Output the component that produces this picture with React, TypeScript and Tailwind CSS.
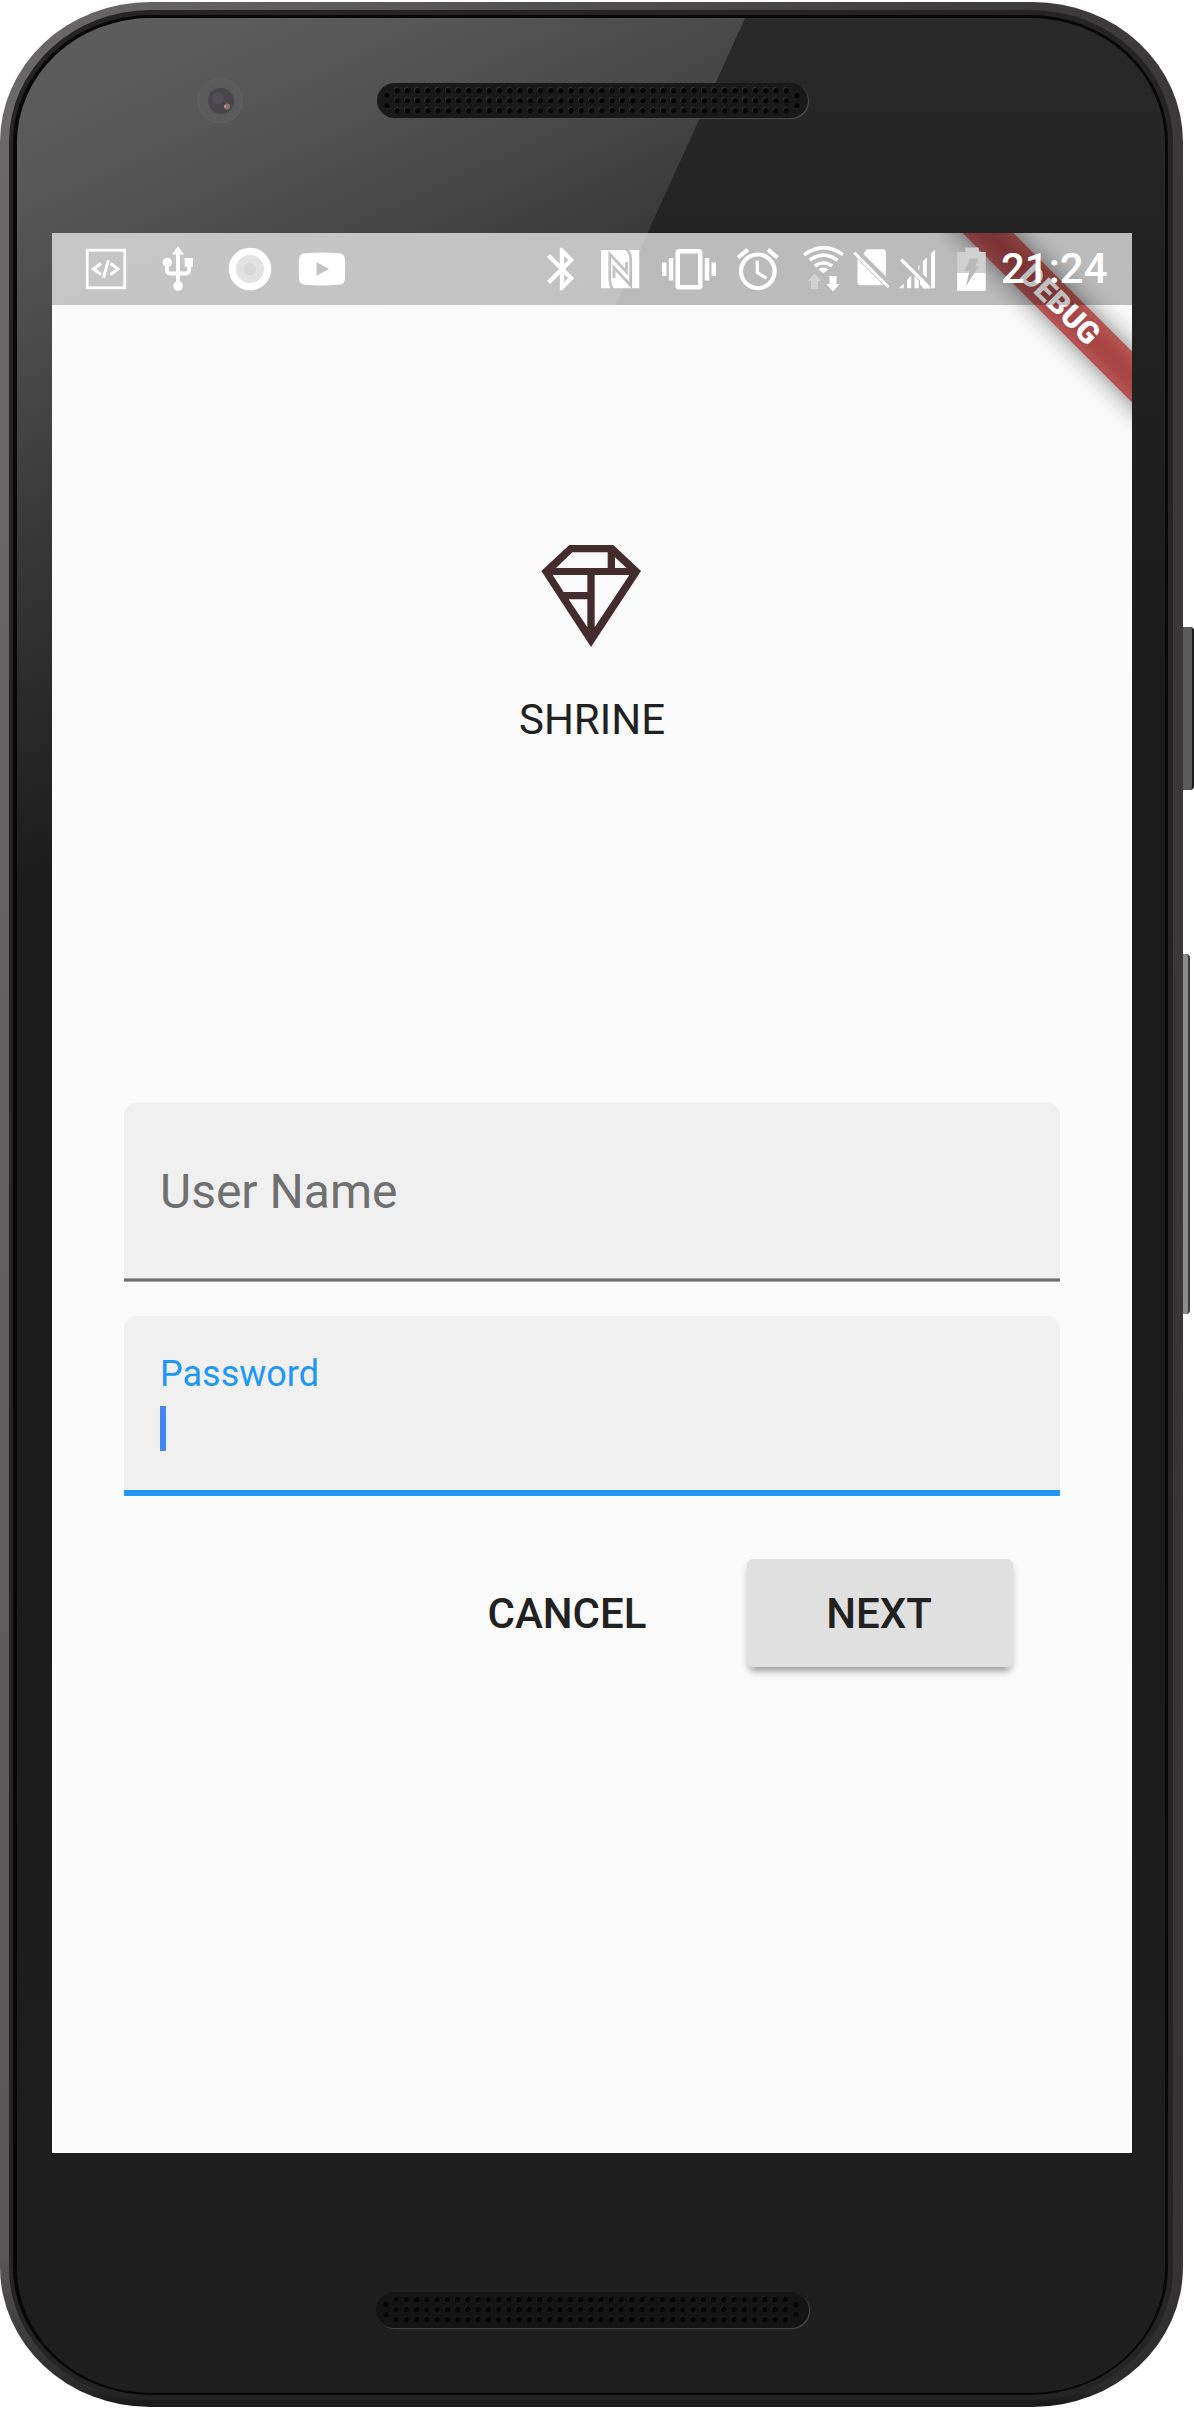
import React from "react";

const COLUMNS = Array.from({ length: 39 }, (_, i) => 20 + i * 10.24);

function Speaker({ dim = false }: { dim?: boolean }) {
  return (
    <div
      className={
        dim
          ? "h-9 w-[433px] rounded-full bg-[#141414] shadow-[1px_1px_1px_#4a4a4a]"
          : "h-[35px] w-[431px] rounded-full bg-[#191919] shadow-[1px_1px_1px_#4d4d4d]"
      }
    >
      <svg width="431" height="35" viewBox="0 0 431 35">
        {COLUMNS.map((x) =>
          [7.5, 17.5, 27.5].map((y) => (
            <g key={`${x}-${y}`}>
              <circle cx={x - 0.7} cy={y - 0.7} r="2.6" fill={dim ? "#202020" : "#383838"} />
              <circle cx={x} cy={y} r="2.6" fill="#050505" />
            </g>
          )),
        )}
        {[10, 420].map((x) =>
          [12.5, 22.5].map((y) => <circle key={`${x}-${y}`} cx={x} cy={y} r="2.6" fill="#050505" />),
        )}
      </svg>
    </div>
  );
}

function Slot({ x, w, children }: { x: number; w: number; children: React.ReactNode }) {
  return (
    <svg className="shrink-0" width={w} height="72" viewBox={`${x} 233 ${w} 72`} fill="#fff">
      {children}
    </svg>
  );
}

function StatusBar() {
  return (
    <div className="relative flex h-[72px] items-center bg-black/25">
      <Slot x={52} w={86}>
        <rect x="87.2" y="250.2" width="37.6" height="37.6" fill="none" stroke="#fff" strokeWidth="2.8" />
        <path
          d="M101 263.5l-7.500 5.500 7.500 5.500M110.500 263.500l7.500 5.500-7.500 5.500M108.300 260.300l-4.800 17.600"
          fill="none"
          stroke="#fff"
          strokeWidth="3"
        />
      </Slot>
      <Slot x={138} w={76}>
        <path d="M178 246l6 8.500h-12z" />
        <circle cx="167.300" cy="262.500" r="4.700" />
        <rect x="184.700" y="258" width="8.300" height="8.600" />
        <circle cx="178" cy="286" r="4.800" />
        <path
          d="M178 253v32M166.900 262v8q0 3.500 3.500 3.500h15.200q3.500 0 3.500-3.500v-5"
          fill="none"
          stroke="#fff"
          strokeWidth="3.900"
        />
      </Slot>
      <Slot x={214} w={72}>
        <circle cx="250" cy="269" r="21.300" />
        <circle cx="250" cy="269" r="14" fill="#ddd" />
        <circle cx="250" cy="269" r="6.200" fill="#d2d2d2" />
      </Slot>
      <Slot x={286} w={72}>
        <path
          fillRule="evenodd"
          d="M305 253.200C316 252.300 328 252.300 339 253.200C343 253.600 344.600 255.500 344.900 259.200C345.300 265.800 345.300 272.200 344.900 278.800C344.600 282.500 343 284.400 339 284.800C328 285.700 316 285.700 305 284.800C301 284.400 299.400 282.500 299.100 278.800C298.700 272.200 298.700 265.800 299.100 259.200C299.400 255.500 301 253.600 305 253.200ZM316.500 262V275.800L329 268.900Z"
        />
      </Slot>
      <div className="flex-1" />
      <Slot x={530} w={56}>
        <path
          transform="translate(536.300 243.400) scale(2.140)"
          d="M17.710 7.710L12 2h-1v7.590L6.410 5 5 6.410 10.590 12 5 17.590 6.410 19 11 14.410V22h1l5.710-5.710-4.300-4.290 4.300-4.290zM13 5.830l1.880 1.880L13 9.590V5.830zm1.880 10.460L13 18.170v-3.760l1.880 1.880z"
        />
      </Slot>
      <Slot x={586} w={66}>
        <rect x="601" y="250" width="38.300" height="38.200" />
        <path
          d="M613.500 289.500Q609.800 287 609.800 278V254L626.500 272V262M625.500 249Q630.700 251 630.700 260V285.500L614 267.500V278"
          fill="none"
          stroke="#bcbcbc"
          strokeWidth="2.800"
        />
      </Slot>
      <Slot x={652} w={76}>
        <path
          transform="translate(662 242.300) scale(2.250)"
          d="M0 15h2V9H0v6zm3 2h2V7H3v10zm19-8v6h2V9h-2zm-3 8h2V7h-2v10zM16.500 3h-9C6.670 3 6 3.670 6 4.500v15c0 .83.67 1.500 1.500 1.500h9c.83 0 1.500-.67 1.500-1.500v-15c0-.83-.67-1.500-1.500-1.500zM16 19H8V5h8v14z"
        />
      </Slot>
      <Slot x={728} w={66}>
        <path
          transform="translate(732.600 244) scale(2.100)"
          d="M22 5.720l-4.600-3.860-1.290 1.530 4.600 3.860L22 5.720zM7.880 3.390L6.600 1.860 2 5.710l1.290 1.530 4.590-3.850zM12.500 8H11v6l4.750 2.850.75-1.230-4-2.370V8zM12 4c-4.970 0-9 4.030-9 9s4.020 9 9 9a9 9 0 000-18zm0 16c-3.870 0-7-3.130-7-7s3.130-7 7-7 7 3.130 7 7-3.130 7-7 7z"
        />
      </Slot>
      <Slot x={794} w={56}>
        <g fill="none" stroke="#fff" strokeWidth="3.500">
          <path d="M804.100 254.800Q823.500 240.500 842.900 254.800" />
          <path d="M809.600 260.200Q823.500 250 837.400 260.200" />
          <path d="M814.900 266Q823.500 259.500 832.100 266" />
        </g>
        <path d="M818.300 269.300q5.200-3.500 10.400 0l-5.200 4z" />
        <path d="M814.500 273.500l6.700 7.500h-3.200v8h-7v-8h-3.200z" fill="#d2d2d2" />
        <path d="M829.500 276h7v8h3.300l-6.800 7.500-6.800-7.500h3.300z" />
      </Slot>
      <Slot x={850} w={44}>
        <path d="M866.500 249.200H882.500q3.500 0 3.500 3.500V276.500L863.500 254zM857.500 259L883.500 285.200H861q-3.500 0-3.500-3.500z" />
        <path d="M854.300 252.700L888.600 287.300" stroke="#fff" strokeWidth="3" />
      </Slot>
      <Slot x={894} w={52}>
        <path d="M931 253.500l4-4v38.700h-4zM922.800 261.500l4-4v20.500l-4-4.200zM918 266.500l1.500-1.500v4.500h-1.500zM899 288.200l4.700-4.700v4.700zM907 280l4.200-4.500v12.700H907zM914.500 276l4.300 4.500v7.700h-4.300zM922.500 282l4 4v2.200h-4z" />
        <path d="M901.200 259.500L929 287.300" stroke="#fff" strokeWidth="3.200" />
        <path d="M920 277.500l11 11h-7l-4-4z" />
      </Slot>
      <Slot x={946} w={52}>
        <path d="M965.300 247.500h13.400v4.500h7v21h-28.500v-21h8.100z" fill="#d0d0d0" />
        <path d="M957.200 273h28.500v17.800h-28.500z" />
        <path d="M970 258.500h8.500l-3.200 8h3.200l-12.700 20 3.700-15.500h-4.700z" fill="#b9b9b9" />
      </Slot>
      <div className="w-[134px] whitespace-nowrap pl-[3px] text-[42px] leading-[72px] font-medium text-white">
        21:24
      </div>
    </div>
  );
}

function DebugRibbon() {
  return (
    <div className="absolute top-[54px] right-[-78px] h-9 w-[300px] rotate-45">
      <div className="absolute inset-y-0 -inset-x-10 bg-black/50 blur-[12px]" />
      <div className="absolute inset-y-0 -inset-x-10 bg-[#b71c1c]/63" />
      <div className="relative text-center text-[30.600px] leading-9 font-black text-white">DEBUG</div>
    </div>
  );
}

function ShrineLogo() {
  return (
    <svg width="102" height="105" viewBox="120 72 306 315">
      <path
        fill="#442b2d"
        fillRule="evenodd"
        d="M208 75H340L423 153L273 381L124 153ZM217 97L168 144H323V97ZM345 112V144H380ZM158 165L191 216H262V165ZM284 165V322L388 165ZM206 238L262 322V238Z"
      />
    </svg>
  );
}

function Screen() {
  return (
    <div className="relative h-[1920px] w-[1080px] overflow-hidden bg-[#fafafa]">
      <DebugRibbon />
      <StatusBar />
      <div className="absolute inset-0 h-60 bg-[linear-gradient(155deg,rgba(255,255,255,.17),rgba(255,255,255,.08)_420px,rgba(255,255,255,.03)_620px)] [clip-path:polygon(0_0,596px_0,488px_240px,0_240px)]" />

      <div className="flex flex-col items-center pt-[239px]">
        <div className="pr-[3px]">
          <ShrineLogo />
        </div>
        <div className="mt-[46px] text-[42px] leading-[49px] text-[#212121]">SHRINE</div>
      </div>

      <div className="mx-[72px] mt-[359px] flex flex-col gap-[34px]">
        <div className="h-[179px] rounded-t-xl bg-[#f0f0f0]">
          <div className="h-[175px] pl-9 text-[48px] leading-[178px] text-[#707070]">User Name</div>
          <div className="h-1 border-y border-[#a3a3a3] bg-[#707070]" />
        </div>
        <div className="h-[180px] rounded-t-xl border-b-6 border-[#2196f3] bg-[#f0f0f0] pt-[37px] pl-9">
          <div className="text-[36px] leading-[42px] text-[#2196f3]">Password</div>
          <div className="mt-[11px] h-[45px] w-1.5 bg-[#4285f4]" />
        </div>
      </div>

      <div className="mt-[63px] mr-[119px] flex justify-end gap-6 text-[42px] leading-none font-medium text-[#212121]">
        <button className="h-[108px] w-[266px] pt-0.5 pr-[46px]">CANCEL</button>
        <button className="h-[108px] w-[266px] rounded-md bg-[#e0e0e0] pt-0.5 pr-0.5 shadow-[0_9px_6px_-6px_rgba(0,0,0,.2),0_6px_6px_rgba(0,0,0,.14),0_3px_9px_-2px_rgba(0,0,0,.12)]">
          NEXT
        </button>
      </div>
    </div>
  );
}

function Camera() {
  return (
    <svg width="46" height="46" viewBox="0 0 46 46">
      <circle cx="23" cy="23" r="22" fill="#5a5a5a" stroke="#626262" />
      <circle cx="24" cy="23" r="13" fill="#48464b" />
      <circle cx="21" cy="20" r="6" fill="#504f57" />
      <circle cx="30" cy="28.500" r="3" fill="#96706c" />
      <circle cx="28" cy="28.500" r="1" fill="#c9a29c" />
    </svg>
  );
}

export default function App() {
  return (
    <div className="flex h-[2409px] w-[1194px] items-start overflow-hidden bg-white pt-0.5 font-[Roboto,sans-serif]">
      <div className="h-[2405px] w-[1183px] shrink-0 rounded-[150px/140px] bg-[linear-gradient(0deg,#1c1c1c,#1c1c1c_6px,#2c2b2b_20px,transparent_150px),linear-gradient(100deg,#6b696a_0%,#5c5a5b_20%,#3e3c3d_60%,#353334_100%)] pt-2 pr-[10px] pb-[7px] pl-[9px]">
        <div className="h-full rounded-[142px/132px] bg-[#252424] pt-[5px] pr-[5px] pb-[5px] pl-[4px]">
          <div className="h-full rounded-[138px/128px] bg-[#070707] pt-[3px] pr-[3px] pb-0.5 pl-1">
            <div className="relative h-full overflow-hidden rounded-[134px/125px] bg-[linear-gradient(180deg,#292929_0px,#222_250px,#1b1b1b_700px,#1b1b1b_1500px,#1e1e1e_2100px)]">
              <div className="absolute inset-0 bg-[linear-gradient(155deg,#5e5e5e_0px,#575757_170px,#454545_354px,#3a3a3a_452px,#1b1b1b_800px)] [clip-path:polygon(0_0,728px_0,0_1607px)]" />
              <div className="relative flex flex-col pl-[35px]">
                <div className="flex h-[215px]">
                  <div className="mt-[60px] ml-[145px]">
                    <Camera />
                  </div>
                  <div className="mt-[65px] ml-[134px]">
                    <Speaker />
                  </div>
                </div>
                <Screen />
                <div className="mt-[139px] ml-[324px]">
                  <Speaker dim />
                </div>
              </div>
            </div>
          </div>
        </div>
      </div>
      <div className="flex w-[11px] flex-col items-start pt-[625px]">
        <div className="h-[163px] w-[11px] rounded-r-sm border-r-2 border-[#1c1c1c] bg-[#5c5b5c]" />
        <div className="mt-[164px] h-[360px] w-[7px] rounded-r-sm border-r-2 border-[#3a3a3a] bg-[#8d8b8c]" />
      </div>
    </div>
  );
}
